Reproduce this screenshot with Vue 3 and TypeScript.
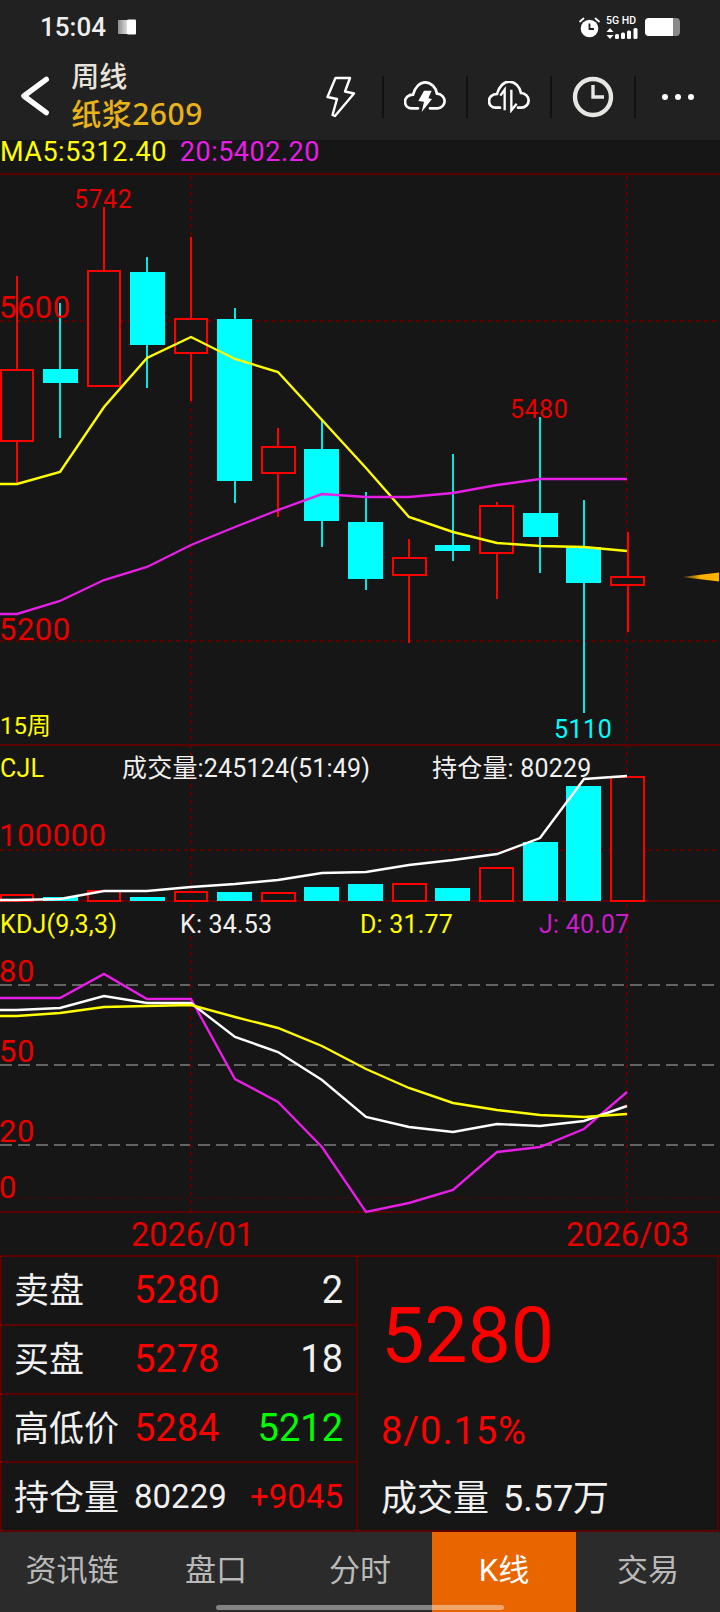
<template>
  <div class="page">
    <div class="status">
      <span class="time">15:04</span>
      <svg class="book" width="18" height="16" viewBox="0 0 18 16">
        <defs>
          <linearGradient id="pageGrad" x1="0" x2="1" y1="0" y2="0">
            <stop offset="0" stop-color="#8c8c8c" />
            <stop offset="1" stop-color="#dcdcdc" />
          </linearGradient>
        </defs>
        <rect x="0" y="1" width="9" height="14" fill="url(#pageGrad)" />
        <rect x="9" y="0.5" width="9" height="15" rx="1" fill="#fff" />
      </svg>
      <span class="grow"></span>
      <svg class="alarm" width="21" height="21" viewBox="0 0 21 21">
        <circle cx="10.5" cy="11.5" r="8.8" fill="#fff" />
        <path d="M10.5 6.5V12H15" fill="none" stroke="#212121" stroke-width="1.8" />
        <path d="M1 4.5 4.5 1.5M20 4.5 16.5 1.5" stroke="#fff" stroke-width="1.8" stroke-linecap="round" />
      </svg>
      <div class="net">
        <span class="net-label">5G HD</span>
        <svg width="32" height="11" viewBox="0 0 32 11">
          <path d="M4 0 7.5 4H.5ZM4 11 .5 7H7.5Z" fill="#fff" />
          <rect x="9" y="6" width="4" height="5" rx="1.5" fill="#fff" />
          <rect x="15" y="4.5" width="4" height="6.5" rx="1.5" fill="#fff" />
          <rect x="21" y="2.5" width="4" height="8.5" rx="1.5" fill="#fff" />
          <rect x="27.5" y="0" width="4" height="11" rx="1.5" fill="#fff" />
        </svg>
      </div>
      <div class="battery"><span class="battery-fill"></span></div>
    </div>

    <header class="head">
      <svg class="back" width="30" height="40" viewBox="0 0 30 40">
        <path d="M27 3 4 20 27 37" fill="none" stroke="#fff" stroke-width="5.5" stroke-linecap="round" stroke-linejoin="round" />
      </svg>
      <div class="titles">
        <div class="period">周线</div>
        <div class="symbol">纸浆2609</div>
      </div>
      <div class="tools">
        <div class="tool">
          <svg width="30" height="42" viewBox="0 0 30 42">
            <path d="M9.5 2H24L19 15.5 28 17.5 9 40 6.5 39 11 23 1.5 21Z" fill="none" stroke="#fff" stroke-width="2.4" stroke-linejoin="round" />
          </svg>
        </div>
        <div class="tool">
          <svg width="42" height="32" viewBox="0 0 126 96">
            <path d="M42 82H24C10 82 3 72 3 62 3 50 13 41 27 41 33 18 48 4 63 4 82 4 96 20 99 38 112 38 122 50 122 60 122 72 112 82 100 82H78" fill="none" stroke="#fff" stroke-width="8" stroke-linecap="round" />
            <path d="M60 29H83L73 52 84 54 53 93 60 62 43 60Z" fill="#fff" />
          </svg>
        </div>
        <div class="tool">
          <svg width="42" height="32" viewBox="0 0 126 96">
            <path d="M36 80H24C10 80 3 70 3 60 3 48 13 39 27 39 33 16 48 2 63 2 82 2 96 18 99 36 112 36 122 48 122 58 122 70 112 80 100 80H90" fill="none" stroke="#fff" stroke-width="8" stroke-linecap="round" />
            <path d="M50 88V26L37 44M70 26V88L86 68" fill="none" stroke="#fff" stroke-width="7" />
          </svg>
        </div>
        <div class="tool">
          <svg width="42" height="42" viewBox="0 0 42 42">
            <circle cx="21" cy="21" r="18" fill="none" stroke="#e8e6e3" stroke-width="4.4" />
            <path d="M21 9V21H32" fill="none" stroke="#e8e6e3" stroke-width="3.4" />
          </svg>
        </div>
        <div class="tool last">
          <span class="dot"></span><span class="dot"></span><span class="dot"></span>
        </div>
      </div>
    </header>

    <div class="ma-row">
      <span class="yellow">MA5:5312.40</span>
      <span class="magenta">20:5402.20</span>
    </div>

    <svg class="chart" width="720" height="1040" viewBox="0 175 720 1040">
      <defs>
        <linearGradient id="arrowGrad" x1="0" x2="1" y1="0" y2="0">
          <stop offset="0" stop-color="#ffb000" stop-opacity="0.2" />
          <stop offset="0.5" stop-color="#ffb000" />
          <stop offset="1" stop-color="#ffb000" />
        </linearGradient>
      </defs>

      <!-- frame lines -->
      <line class="frame" x1="0" x2="720" y1="745" y2="745" />
      <line class="frame" x1="0" x2="720" y1="901" y2="901" />
      <line class="frame" x1="0" x2="720" y1="1212" y2="1212" />
      <line v-for="y in [321, 641, 850]" :key="y" class="grid" x1="0" x2="720" :y1="y" :y2="y" />
      <line class="grid-fine" x1="0" x2="720" y1="1198" y2="1198" />
      <line v-for="y in [985, 1065, 1145]" :key="y" class="level" x1="0" x2="716" :y1="y" :y2="y" />
      <line v-for="x in [191, 627]" :key="x" class="grid vert" :x1="x" :x2="x" y1="176" y2="1212" />

      <!-- candles -->
      <g v-for="c in candles" :key="c.cx">
        <line :class="c.up ? 'wick-up' : 'wick-down'" :x1="c.cx" :x2="c.cx" :y1="c.high" :y2="c.low" />
        <rect v-if="c.up" class="box-up" :x="c.left + 1" :y="c.top + 1" :width="c.right - c.left - 2" :height="c.bottom - c.top - 2" />
        <rect v-else class="box-down" :x="c.left" :y="c.top" :width="c.right - c.left" :height="c.bottom - c.top" />
      </g>
      <polyline class="line ma5" :points="ma5" />
      <polyline class="line ma20" :points="ma20" />
      <path d="M682 577 719 572.5V581.5Z" fill="url(#arrowGrad)" />

      <text class="t red p25" x="74" y="208">5742</text>
      <text class="t red s30" x="-1" y="318">5600</text>
      <text class="t red p25" x="510" y="418">5480</text>
      <text class="t red s30" x="-1" y="640">5200</text>
      <text class="t cyan p25" x="554" y="738">5110</text>
      <text class="t yellow-f s24" x="0" y="734">15周</text>

      <!-- volume -->
      <g v-for="c in candles" :key="'v' + c.cx">
        <rect v-if="c.up" class="box-up" :x="c.left + 1" :y="c.vol + 1" :width="c.right - c.left - 2" :height="900 - c.vol" />
        <rect v-else class="box-down" :x="c.left" :y="c.vol" :width="c.right - c.left" :height="901 - c.vol" />
      </g>
      <polyline class="line white" :points="volLine" />
      <text class="t yellow-f s25" x="0" y="777">CJL</text>
      <text class="t white-f s25" x="122" y="777">成交量:245124(51:49)</text>
      <text class="t white-f s25" x="432" y="777">持仓量: 80229</text>
      <text class="t red s30" x="-1" y="846">100000</text>

      <!-- kdj -->
      <polyline class="line ma20" :points="jLine" />
      <polyline class="line white" :points="kLine" />
      <polyline class="line ma5" :points="dLine" />
      <text class="t yellow-f s25" x="0" y="933">KDJ(9,3,3)</text>
      <text class="t white-f s25" x="180" y="933">K: 34.53</text>
      <text class="t yellow-f s25" x="360" y="933">D: 31.77</text>
      <text class="t purple s25" x="539" y="933">J: 40.07</text>
      <text class="t red s30" x="-1" y="982">80</text>
      <text class="t red s30" x="-1" y="1062">50</text>
      <text class="t red s30" x="-1" y="1142">20</text>
      <text class="t red s30" x="-1" y="1198">0</text>
    </svg>

    <div class="dates">
      <span>2026/01</span>
      <span>2026/03</span>
    </div>

    <section class="quote">
      <div class="book-table">
        <div v-for="r in rows" :key="r.label" class="row">
          <span class="label">{{ r.label }}</span>
          <span class="v1" :class="[r.c1, { small: r.small }]">{{ r.v1 }}</span>
          <span class="v2" :class="[r.c2, { small: r.small }]">{{ r.v2 }}</span>
        </div>
      </div>
      <div class="summary">
        <div class="last-price">5280</div>
        <div class="change">8/0.15%</div>
        <div class="turnover">成交量 5.57万</div>
      </div>
    </section>

    <nav class="tabs">
      <div v-for="t in tabs" :key="t" class="tab" :class="{ active: t === 'K线' }">{{ t }}</div>
    </nav>
    <div class="home-bar"></div>
  </div>
</template>

<script setup lang="ts">
interface Candle {
  cx: number
  left: number
  right: number
  top: number
  bottom: number
  high: number
  low: number
  vol: number
  up: boolean
}

const candles: Candle[] = [
  { cx: 17, left: 0, right: 34, top: 369, bottom: 442, high: 276, low: 485, vol: 894, up: true },
  { cx: 60, left: 43, right: 78, top: 369, bottom: 383, high: 303, low: 438, vol: 897, up: false },
  { cx: 104, left: 87, right: 121, top: 270, bottom: 387, high: 207, low: 387, vol: 890, up: true },
  { cx: 147, left: 130, right: 165, top: 272, bottom: 345, high: 257, low: 388, vol: 897, up: false },
  { cx: 191, left: 174, right: 208, top: 318, bottom: 354, high: 237, low: 401, vol: 891, up: true },
  { cx: 235, left: 217, right: 252, top: 319, bottom: 481, high: 308, low: 503, vol: 892, up: false },
  { cx: 278, left: 261, right: 296, top: 446, bottom: 474, high: 428, low: 517, vol: 892, up: true },
  { cx: 322, left: 304, right: 339, top: 449, bottom: 521, high: 420, low: 547, vol: 887, up: false },
  { cx: 366, left: 348, right: 383, top: 522, bottom: 579, high: 492, low: 590, vol: 884, up: false },
  { cx: 409, left: 392, right: 427, top: 557, bottom: 576, high: 539, low: 643, vol: 883, up: true },
  { cx: 453, left: 435, right: 470, top: 545, bottom: 551, high: 454, low: 561, vol: 888, up: false },
  { cx: 497, left: 479, right: 514, top: 505, bottom: 554, high: 502, low: 599, vol: 867, up: true },
  { cx: 540, left: 523, right: 558, top: 513, bottom: 537, high: 417, low: 573, vol: 842, up: false },
  { cx: 584, left: 566, right: 601, top: 547, bottom: 583, high: 500, low: 713, vol: 786, up: false },
  { cx: 628, left: 610, right: 645, top: 576, bottom: 586, high: 532, low: 632, vol: 776, up: true },
]

const ma5 = '0,484 17,484 60,472 104,407 147,358 191,337 235,359 278,372 322,420 366,468 409,517 453,532 497,543 540,546 584,547 627,551'
const ma20 = '0,614 17,614 60,601 104,580 147,567 191,545 235,527 278,510 322,494 366,497 409,497 453,493 497,485 540,479 584,479 627,479'
const volLine = '0,900 17,900 60,899 104,891 147,891 191,887 235,884 278,880 322,873 366,872 409,865 453,860 497,854 540,838 584,779 627,776'
const jLine = '0,998 60,998 104,974 147,999 191,999 235,1079 278,1102 322,1147 366,1212 409,1203 453,1190 497,1152 540,1147 584,1129 627,1092'
const kLine = '0,1010 17,1010 60,1008 104,996 147,1003 191,1003 235,1037 278,1052 322,1080 366,1117 409,1127 453,1132 497,1124 540,1126 584,1121 627,1106'
const dLine = '0,1016 17,1016 60,1013 104,1007 147,1006 191,1005 235,1017 278,1028 322,1046 366,1069 409,1088 453,1103 497,1110 540,1115 584,1117 627,1114'

const rows = [
  { label: '卖盘', v1: '5280', v2: '2', c1: 'red-t', c2: 'white-t', small: false },
  { label: '买盘', v1: '5278', v2: '18', c1: 'red-t', c2: 'white-t', small: false },
  { label: '高低价', v1: '5284', v2: '5212', c1: 'red-t', c2: 'green-t', small: false },
  { label: '持仓量', v1: '80229', v2: '+9045', c1: 'white-t', c2: 'red-t', small: true },
]

const tabs = ['资讯链', '盘口', '分时', 'K线', '交易']
</script>

<style>
html,
body {
  margin: 0;
  background: #161616;
}
</style>

<style scoped>
.page {
  position: relative;
  width: 720px;
  height: 1612px;
  overflow: hidden;
  display: flex;
  flex-direction: column;
  background: #161616;
  font-family: Roboto, "Noto Sans CJK SC", sans-serif;
}

.status {
  height: 54px;
  flex: none;
  box-sizing: border-box;
  padding: 0 40px 0 40px;
  display: flex;
  align-items: center;
  background: #212121;
}
.time {
  font-size: 26px;
  font-weight: 500;
  color: #eee;
  margin-right: 12px;
}
.grow {
  flex: 1;
}
.net {
  width: 33px;
  margin: 0 6px 0 6px;
  display: flex;
  flex-direction: column;
  gap: 1px;
}
.net-label {
  font-size: 10.5px;
  line-height: 12px;
  font-weight: 500;
  color: #fff;
  white-space: nowrap;
}
.battery {
  width: 35px;
  height: 18px;
  border-radius: 4px;
  background: #8a8a8a;
  overflow: hidden;
}
.battery-fill {
  display: block;
  width: 28px;
  height: 18px;
  background: #fff;
}

.head {
  height: 86px;
  flex: none;
  display: flex;
  align-items: center;
  background: #212121;
  padding-left: 20px;
}
.back {
  margin-top: -2px;
}
.titles {
  margin-left: 22px;
  width: 235px;
  font-family: "Noto Sans", "Noto Sans CJK SC", sans-serif;
}
.period {
  font-size: 28px;
  line-height: 36px;
  margin-top: -3px;
  margin-bottom: 1px;
  font-weight: 500;
  color: #e8e4dc;
}
.symbol {
  font-size: 30px;
  line-height: 38px;
  letter-spacing: 0.5px;
  font-weight: 500;
  color: #e8b318;
}
.tools {
  display: flex;
  align-items: center;
}
.tool {
  width: 84px;
  height: 42px;
  box-sizing: border-box;
  border-right: 2px solid #111;
  display: flex;
  align-items: center;
  justify-content: center;
  gap: 7px;
}
.tool.last {
  border-right: 0;
}
.dot {
  width: 6px;
  height: 6px;
  border-radius: 50%;
  background: #fff;
}

.ma-row {
  height: 33px;
  flex: none;
  display: flex;
  gap: 13px;
  align-items: flex-start;
  font-size: 27px;
  line-height: 24px;
  letter-spacing: 0.5px;
  border-bottom: 2px solid #5c0000;
  white-space: nowrap;
}
.yellow {
  color: #ff0;
}
.magenta {
  color: #e61ee6;
}

.chart {
  display: block;
  flex: none;
}
.frame {
  stroke: #5c0000;
  stroke-width: 2;
}
.grid {
  stroke: #5c0000;
  stroke-width: 2;
  stroke-dasharray: 4 4;
}
.grid-fine {
  stroke: #5c0000;
  stroke-width: 1;
  stroke-dasharray: 3 3;
}
.level {
  stroke: #646464;
  stroke-width: 2;
  stroke-dasharray: 12 6;
}
.wick-up {
  stroke: #f00;
  stroke-width: 2;
}
.wick-down {
  stroke: #00e8e8;
  stroke-width: 2;
}
.box-up {
  fill: #161616;
  stroke: #f00;
  stroke-width: 2;
}
.box-down {
  fill: #0ff;
}
.line {
  fill: none;
  stroke-width: 2.4;
}
.ma5 {
  stroke: #ff0;
}
.ma20 {
  stroke: #e61ee6;
}
.white {
  stroke: #fff;
}
.t {
  font-family: Roboto, "Noto Sans CJK SC", sans-serif;
}
.red {
  fill: #e80000;
}
.cyan {
  fill: #0ff;
}
.yellow-f {
  fill: #ff0;
}
.white-f {
  fill: #f0f0f0;
}
.purple {
  fill: #c81ec8;
}
.s24 {
  font-size: 24px;
}
.s25 {
  font-size: 25px;
  letter-spacing: 0.2px;
}
.p25 {
  font-size: 25px;
  letter-spacing: 0.5px;
}
.s30 {
  font-size: 31px;
  letter-spacing: 0.5px;
}

.dates {
  height: 40px;
  flex: none;
  display: flex;
  justify-content: space-between;
  align-items: center;
  padding: 0 31px 0 131px;
  font-size: 32.5px;
  color: #e80000;
}

.quote {
  height: 277px;
  flex: none;
  display: flex;
  box-sizing: border-box;
  margin: 0 1px 0 0;
  border: 2px solid #5c0000;
}
.book-table {
  width: 356px;
  flex: none;
  border-right: 2px solid #5c0000;
  box-sizing: border-box;
  display: flex;
  flex-direction: column;
}
.row {
  flex: 1;
  display: flex;
  align-items: center;
  padding: 0 13px 0 12px;
  border-bottom: 2px solid #5c0000;
}
.row:last-child {
  border-bottom: 0;
}
.label {
  width: 120px;
  flex: none;
  margin-bottom: 5px;
  font-size: 35px;
  color: #f0f0f0;
}
.v1 {
  font-size: 38px;
  color: #f00;
}
.v2 {
  flex: 1;
  text-align: right;
  font-size: 38px;
}
.small {
  font-size: 33px;
}
.red-t {
  color: #f00;
}
.white-t {
  color: #f0f0f0;
}
.green-t {
  color: #0f0;
}

.summary {
  flex: 1;
  padding-left: 23px;
  display: flex;
  flex-direction: column;
}
.last-price {
  font-size: 77px;
  line-height: 90px;
  margin-top: 34px;
  color: #f00;
}
.change {
  font-size: 38px;
  line-height: 44px;
  letter-spacing: 1px;
  margin-top: 28px;
  color: #f00;
}
.turnover {
  font-size: 36px;
  line-height: 44px;
  word-spacing: 5px;
  margin-top: 24px;
  color: #f0f0f0;
}

.tabs {
  flex: 1;
  display: flex;
  background: #2b2b2b;
}
.tab {
  width: 144px;
  box-sizing: border-box;
  padding-top: 19px;
  text-align: center;
  font-size: 31px;
  line-height: 40px;
  color: #b9b9b9;
}
.tab.active {
  background: #e86500;
  color: #fff;
}
.home-bar {
  position: absolute;
  left: 216px;
  bottom: 2px;
  width: 288px;
  height: 5px;
  border-radius: 3px;
  background: rgba(255, 255, 255, 0.42);
}
</style>
